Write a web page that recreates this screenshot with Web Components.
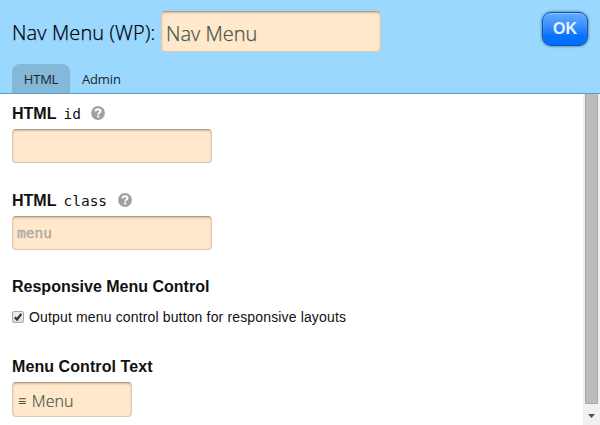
<!DOCTYPE html>
<html lang="en">
<head>
<meta charset="utf-8">
<title>Nav Menu (WP)</title>
<style>
html, body { margin: 0; height: 100%; overflow: hidden; background: #fff; }
body { font-family: "Liberation Sans", Arial, sans-serif; color: #111; }
</style>
</head>
<body>
<options-panel></options-panel>
<script>
const define = (name, html) => customElements.define(name, class extends HTMLElement {
  constructor() {
    super();
    const t = document.createElement('template');
    t.innerHTML = html;
    this.attachShadow({ mode: 'open' }).append(t.content.cloneNode(true));
  }
});

define('text-field', `
<style>
:host { display: flex; align-items: center; box-sizing: border-box; width: 200px; height: 34px;
  padding: 0 5px; background: #ffe8cc; color: #556353; border: 1px solid rgba(0,0,0,.13);
  border-top-color: rgba(0,0,0,.32); border-radius: 4px;
  box-shadow: inset 0 1px 2px rgba(0,0,0,.2); white-space: pre;
  font-family: "Open Sans", sans-serif; }
</style><slot></slot>`);

define('help-icon', `
<style>:host { display: block; width: 14px; height: 14px; white-space: normal; } svg { display: block; }</style>
<svg width="14" height="14" viewBox="0 0 14 14"><circle cx="7" cy="7" r="6.900" fill="#a0a0a0"/>
<path d="M4.400 5.400C4.600 4 5.600 3.200 7 3.200c1.500 0 2.500.8 2.500 2C9.500 6.900 7.200 6.700 7.200 8.600" fill="none" stroke="#fff" stroke-width="2"/>
<rect x="6.100" y="9.500" width="2.200" height="2" fill="#fff"/></svg>`);

define('field-label', `
<style>
:host { display: flex; align-items: center; height: 20px; font-size: 16px; font-weight: bold; white-space: pre; }
::slotted(code) { font: 14.500px "DejaVu Sans Mono", monospace; margin-left: 7px; }
::slotted(help-icon) { margin: -2px 0 0 10.500px; }
</style><slot></slot>`);

define('check-option', `
<style>
:host { display: flex; align-items: center; height: 18px; font-size: 14px; letter-spacing: .15px; white-space: pre; }
.box { box-sizing: border-box; width: 12px; height: 12px; margin-right: 5px; border: 1px solid #a9a9a9;
  border-radius: 2px; background: linear-gradient(#eee, #ddd); }
svg { display: block; }
</style>
<span class="box"><svg width="10" height="10" viewBox="0 0 10 10"><path d="M1.800 5.200 4 7.500 8.300 1.900" fill="none" stroke="#333" stroke-width="2.200"/></svg></span><slot></slot>`);

define('tab-item', `
<style>
:host { display: flex; align-items: center; justify-content: center; box-sizing: border-box; height: 29px;
  padding: 0 12px; font: 13px "Open Sans", sans-serif; letter-spacing: -.15px; color: #202428; border-radius: 8px 8px 0 0; }
:host([active]) { background: #83b8d8; width: 58px; letter-spacing: -.2px; }
</style><slot></slot>`);

define('ok-button', `
<style>
:host { display: flex; align-items: center; justify-content: center; box-sizing: border-box; width: 46px; height: 34px;
  font-size: 16px; font-weight: bold; color: #e6f1ff; border: 1px solid #0a55b8; border-radius: 9px;
  background: linear-gradient(#62aaff 0, #3b90ff 40%, #0672ff 72%, #0070ff);
  box-shadow: 0 0 3px rgba(0,0,0,.6), inset 0 1px 1px rgba(255,255,255,.35); }
</style><slot></slot>`);

define('panel-header', `
<style>
:host { display: flex; flex-direction: column; box-sizing: border-box; height: 94px; padding: 11px 12px 0;
  background: #9ad8ff; border-bottom: 1px solid #539dca; }
.title { display: flex; height: 53px; align-items: flex-start; }
.name { width: 149px; font: 300 20px/44px "Open Sans", sans-serif; letter-spacing: .12px; white-space: pre; color: #000; -webkit-text-stroke: .25px; }
text-field { width: 220px; height: 41px; font-size: 20px; font-weight: 300; padding: 4px 4px 0; color: #46564a; -webkit-text-stroke: .25px; }
ok-button { margin: 1px 0 0 auto; }
nav { display: flex; }
</style>
<div class="title"><span class="name">Nav Menu (WP):</span><text-field>Nav Menu</text-field><ok-button>OK</ok-button></div>
<nav><tab-item active>HTML</tab-item><tab-item>Admin</tab-item></nav>`);

define('scroll-bar', `
<style>
:host { display: flex; flex-direction: column; align-items: center; width: 17px; background: #f1f1f1; }
.thumb { box-sizing: border-box; width: 13px; height: 310px; background: #bcbcbc; border: 1px solid #a8a8a8; border-top: 0; }
svg { display: block; margin-top: 10px; }
</style><div class="thumb"></div><svg width="7" height="4"><path d="M0 0H7L3.500 4Z" fill="#505050"/></svg>`);

define('options-panel', `
<style>
:host { display: flex; flex-direction: column; height: 425px; width: 600px; overflow: hidden; }
.body { flex: 1; display: flex; min-height: 0; }
main { flex: 1; padding: 10px 12px 0; }
section { display: flex; flex-direction: column; }
.f { height: 87px; }
.f text-field { margin-top: 5px; }
.r { height: 79px; }
.r field-label { margin-top: -1px; }
.r check-option { margin-top: 11px; }
.mono { font: 14.500px "DejaVu Sans Mono", monospace; color: #b0aaa2; padding-left: 4px; -webkit-text-stroke: .4px; }
.m { width: 120px; height: 35px; font-size: 16px; font-weight: 300; color: #46564a; padding-top: 2px; -webkit-text-stroke: .2px; }
.m span { font-size: 14px; -webkit-text-stroke: 0; margin-right: 1.500px; }
.l { letter-spacing: .08px; }
section:last-child text-field { margin-top: 5px; }
</style>
<panel-header></panel-header>
<div class="body">
<main>
<section class="f"><field-label><b>HTML</b><code>id</code><help-icon></help-icon></field-label><text-field></text-field></section>
<section class="f"><field-label><b>HTML</b><code>class</code><help-icon></help-icon></field-label><text-field class="mono">menu</text-field></section>
<section class="r"><field-label>Responsive Menu Control</field-label><check-option>Output menu control button for responsive layouts</check-option></section>
<section><field-label class="l">Menu Control Text</field-label><text-field class="m"><span>≡</span> Menu</text-field></section>
</main>
<scroll-bar></scroll-bar>
</div>`);
</script>
</body>
</html>
